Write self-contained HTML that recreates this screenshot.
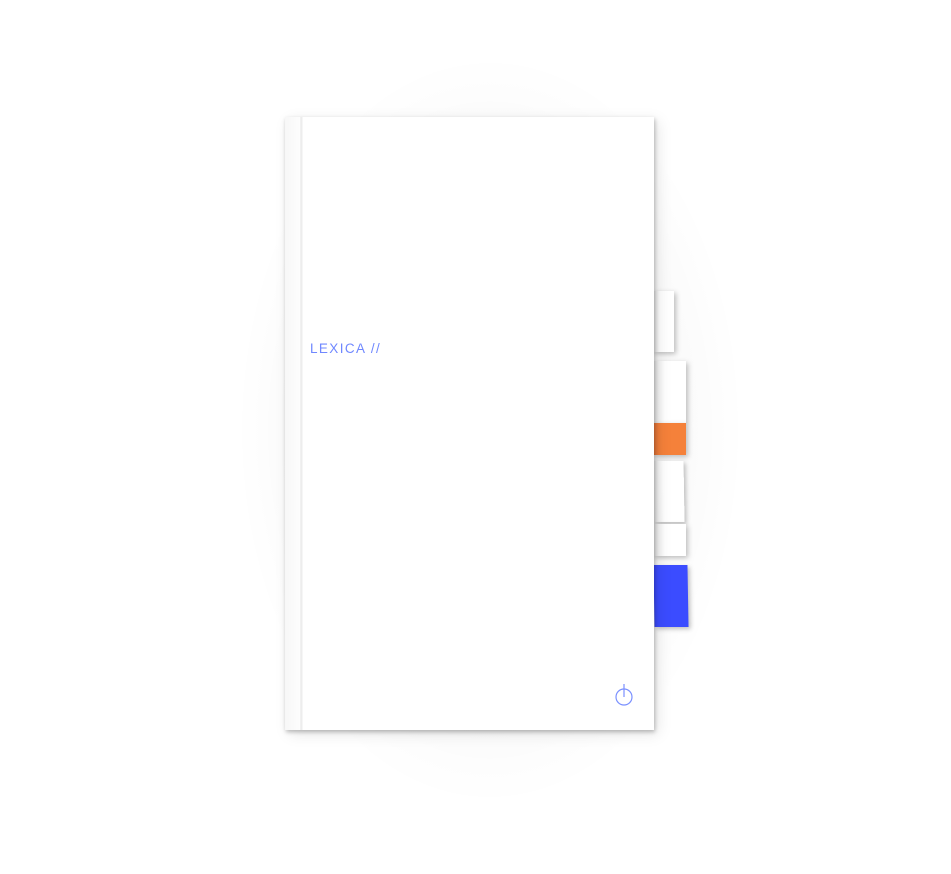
<!DOCTYPE html>
<html><head><style>
html,body{margin:0;padding:0;width:951px;height:874px;background:#fff;overflow:hidden;position:relative;font-family:"Liberation Sans",sans-serif}
.glow{position:absolute;left:240px;top:60px;width:500px;height:740px;border-radius:45%;background:radial-gradient(ellipse at center,rgba(0,0,0,0.06) 0%,rgba(0,0,0,0.025) 50%,rgba(0,0,0,0) 72%)}
.tab{position:absolute;box-shadow:2px 2px 5px rgba(0,0,0,0.25);background:linear-gradient(90deg,#e6e6e6,#fff 35%,#fff)}
.book{position:absolute;left:285px;top:117px;width:369px;height:613px;background:#fff;box-shadow:1px 2px 4px rgba(0,0,0,0.25),4px 4px 14px rgba(0,0,0,0.1)}
.spine{position:absolute;left:15px;top:0;width:3px;height:100%;background:linear-gradient(90deg,#f4f4f4,#ebebeb,#fbfbfb)}
.leftedge{position:absolute;left:0;top:0;width:15px;height:100%;background:linear-gradient(90deg,#f7f7f7,#fdfdfd)}
.title{position:absolute;left:25px;top:224px;color:#7088ff;font-size:13.5px;letter-spacing:1.4px}
</style></head><body>
<div class="glow"></div>
<div class="tab" style="left:653px;top:291px;width:21px;height:61px"></div>
<div class="tab" style="left:653px;top:361px;width:33px;height:62px"></div>
<div class="tab" style="left:653px;top:423px;width:33px;height:32px;background:linear-gradient(90deg,#e8773a,#f5813a 30%)"></div>
<div class="tab" style="left:653px;top:461px;width:31px;height:61px;transform:skewX(1deg)"></div>
<div class="tab" style="left:653px;top:524px;width:33px;height:32px"></div>
<div class="tab" style="left:654px;top:565px;width:34px;height:62px;background:#3b4cff;transform:skewX(1deg)"></div>
<div class="book">
<div class="leftedge"></div>
<div class="spine"></div>
<div class="title">LEXICA //</div>
<svg style="position:absolute;left:328px;top:565px" width="24" height="24" viewBox="0 0 24 24"><circle cx="11" cy="15" r="8" fill="none" stroke="#7a90ff" stroke-width="1.2"/><line x1="11" y1="2" x2="11" y2="15" stroke="#7a90ff" stroke-width="1.2"/></svg>
</div>
</body></html>
